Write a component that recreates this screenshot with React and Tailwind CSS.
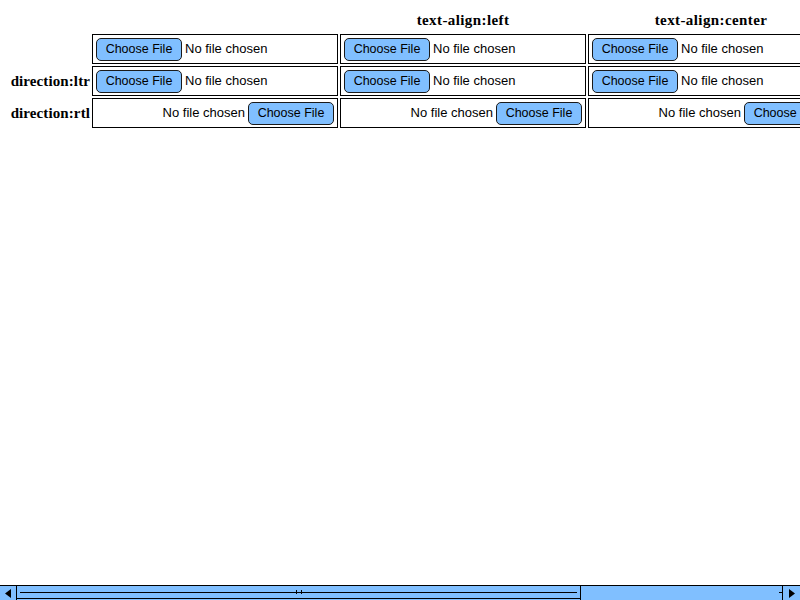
const columns = ['', 'text-align:left', 'text-align:center']
const rows = [
  { label: '', rtl: false },
  { label: 'direction:ltr', rtl: false },
  { label: 'direction:rtl', rtl: true },
]

function FileInput({ rtl }) {
  return (
    <div
      className={`h-[30px] border border-black flex items-center gap-[3px] px-[3px] ${rtl ? 'flex-row-reverse' : ''}`}
    >
      <span className="h-[23px] w-[86px] shrink-0 flex items-center justify-center rounded-[5px] border border-[#1a1a1a] bg-[#80bfff] text-[12.5px] text-black">
        Choose File
      </span>
      <span className="text-[13px] text-black whitespace-nowrap">No file chosen</span>
    </div>
  )
}

function Scrollbar() {
  return (
    <div className="h-[15px] border-t border-black bg-[#80bfff] flex">
      <div className="w-[17px] h-full border-r border-black flex items-center justify-center">
        <svg width="8" height="9" viewBox="0 0 8 9">
          <path d="M7 0 L1 4.5 L7 9 Z" fill="#000" />
        </svg>
      </div>
      <div className="relative w-[564px] h-full border-r border-black">
        <div className="absolute left-[3px] right-[3px] top-[6px] h-px bg-black" />
        <div className="absolute left-0 right-0 bottom-[1px] h-px bg-black" />
        <div className="absolute left-[279px] top-[4px] w-px h-[4px] bg-black" />
        <div className="absolute left-[284px] top-[4px] w-px h-[4px] bg-black" />
      </div>
      <div className="flex-1 relative">
        <div className="absolute right-0 top-[6px] w-[3px] h-px bg-black" />
      </div>
      <div className="w-[18px] h-full border-l border-black flex items-center justify-center">
        <svg width="8" height="9" viewBox="0 0 8 9">
          <path d="M1 0 L7 4.5 L1 9 Z" fill="#000" />
        </svg>
      </div>
    </div>
  )
}

export default function App() {
  return (
    <div className="w-[800px] h-[600px] bg-white overflow-hidden flex flex-col font-['Liberation_Sans',Arial,sans-serif]">
      <div className="flex-1 overflow-hidden pt-[6px]">
        <div className="grid w-max grid-cols-[88px_246px_246px_246px] gap-[2px] p-[2px]">
          <div className="h-[24px]" />
          {columns.map((c, i) => (
            <div
              key={i}
              className="h-[24px] flex items-center justify-center font-['Liberation_Serif',serif] font-bold text-[15px] tracking-[0.4px] text-black"
            >
              {c}
            </div>
          ))}
          {rows.map((r, i) => (
            <>
              <div
                key={`l${i}`}
                className="h-[30px] flex items-center justify-end font-['Liberation_Serif',serif] font-bold text-[15px] tracking-[0.1px] text-black whitespace-nowrap"
              >
                {r.label}
              </div>
              <FileInput key={`a${i}`} rtl={r.rtl} />
              <FileInput key={`b${i}`} rtl={r.rtl} />
              <FileInput key={`c${i}`} rtl={r.rtl} />
            </>
          ))}
        </div>
      </div>
      <Scrollbar />
    </div>
  )
}
